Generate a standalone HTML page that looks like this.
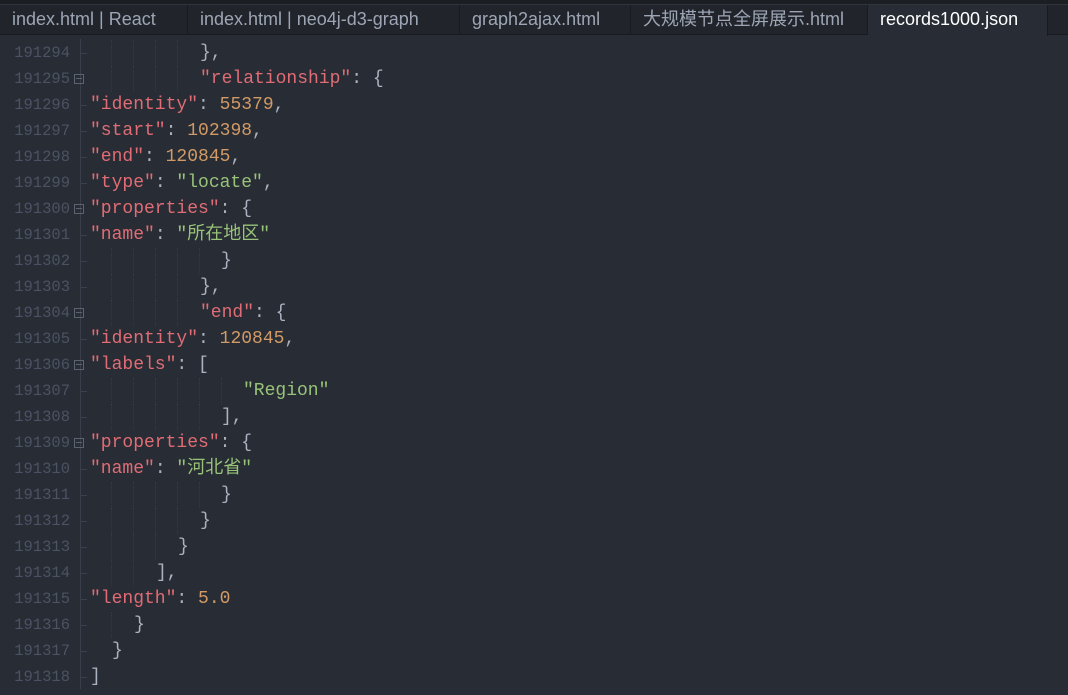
<!DOCTYPE html>
<html><head><meta charset="utf-8"><style>
*{margin:0;padding:0;box-sizing:border-box}
body{width:1068px;height:695px;background:#282c34;overflow:hidden;position:relative;font-family:"Liberation Mono",monospace}
.top{position:absolute;left:0;top:0;width:1068px;height:5px;background:#1b1e23;border-bottom:1px solid #30343c}
.tabs{position:absolute;left:0;top:5px;width:1068px;height:30px;background:#21252b;border-bottom:1px solid #181a1f}
.tab{position:absolute;top:0;height:30px;line-height:29px;color:#9da5b4;font-family:"Liberation Sans","Noto Sans CJK SC",sans-serif;font-size:18px;padding-left:12px;border-right:1px solid #181a1f;white-space:nowrap;overflow:hidden}
.tab.act{background:#282c34;color:#fff;height:31px}
.ln{position:absolute;left:0;width:70px;text-align:right;color:#4b5263;font-size:15.5px;line-height:26px}
.f{position:absolute;left:74px;width:10px;height:10px;border:1px solid #5c6370}
.f:after{content:"";position:absolute;left:1px;top:3px;width:6px;height:1px;background:#5c6370}
.gut{position:absolute;left:80px;top:39px;width:1px;height:650px;background:#3a3f4b}
.tick{position:absolute;left:80px;width:7px;height:1px;background:#3a3f4b}
.c{position:absolute;font-size:18px;line-height:26px;color:#abb2bf;white-space:pre;font-family:"Liberation Mono","Noto Sans CJK SC",monospace}
.k{color:#e06c75}.n{color:#d19a66}.s{color:#98c379}
.g{position:absolute;width:0;height:26px;border-left:1px dotted #353a44}
</style></head><body>
<div class="top"></div>
<div class="tabs">
<div class="tab" style="left:0;width:188px">index.html | React</div>
<div class="tab" style="left:188px;width:272px">index.html | neo4j-d3-graph</div>
<div class="tab" style="left:460px;width:171px">graph2ajax.html</div>
<div class="tab" style="left:631px;width:237px">大规模节点全屏展示.html</div>
<div class="tab act" style="left:868px;width:180px">records1000.json</div>
</div>
<div class="gut"></div>
<div id="code"></div>
<script>
var L=[
[200,'},'],[200,'<span class=k>"relationship"</span>: {',1],
[90,'<span class=k>"identity"</span>: <span class=n>55379</span>,'],
[90,'<span class=k>"start"</span>: <span class=n>102398</span>,'],
[90,'<span class=k>"end"</span>: <span class=n>120845</span>,'],
[90,'<span class=k>"type"</span>: <span class=s>"locate"</span>,'],
[90,'<span class=k>"properties"</span>: {',1],
[90,'<span class=k>"name"</span>: <span class=s>"所在地区"</span>'],
[221,'}'],[200,'},'],[200,'<span class=k>"end"</span>: {',1],
[90,'<span class=k>"identity"</span>: <span class=n>120845</span>,'],
[90,'<span class=k>"labels"</span>: [',1],
[243,'<span class=s>"Region"</span>'],[221,'],'],
[90,'<span class=k>"properties"</span>: {',1],
[90,'<span class=k>"name"</span>: <span class=s>"河北省"</span>'],
[221,'}'],[200,'}'],[178,'}'],[156,'],'],
[90,'<span class=k>"length"</span>: <span class=n>5.0</span>'],
[134,'}'],[112,'}'],[90,']']];
var h='',guides=[111,133,155,177,199,221];
L.forEach(function(l,i){var y=40+26*i;
h+='<div class="ln" style="top:'+y+'px">'+(191294+i)+'</div>';
if(l[2])h+='<div class="f" style="top:'+(y+8)+'px"></div>';else h+='<div class="tick" style="top:'+(y+13)+'px"></div>';
guides.forEach(function(g){if(g<l[0]-5)h+='<div class="g" style="left:'+g+'px;top:'+y+'px"></div>';});
h+='<div class="c" style="left:'+l[0]+'px;top:'+y+'px">'+l[1]+'</div>';});
document.getElementById('code').innerHTML=h;
</script>
</body></html>
